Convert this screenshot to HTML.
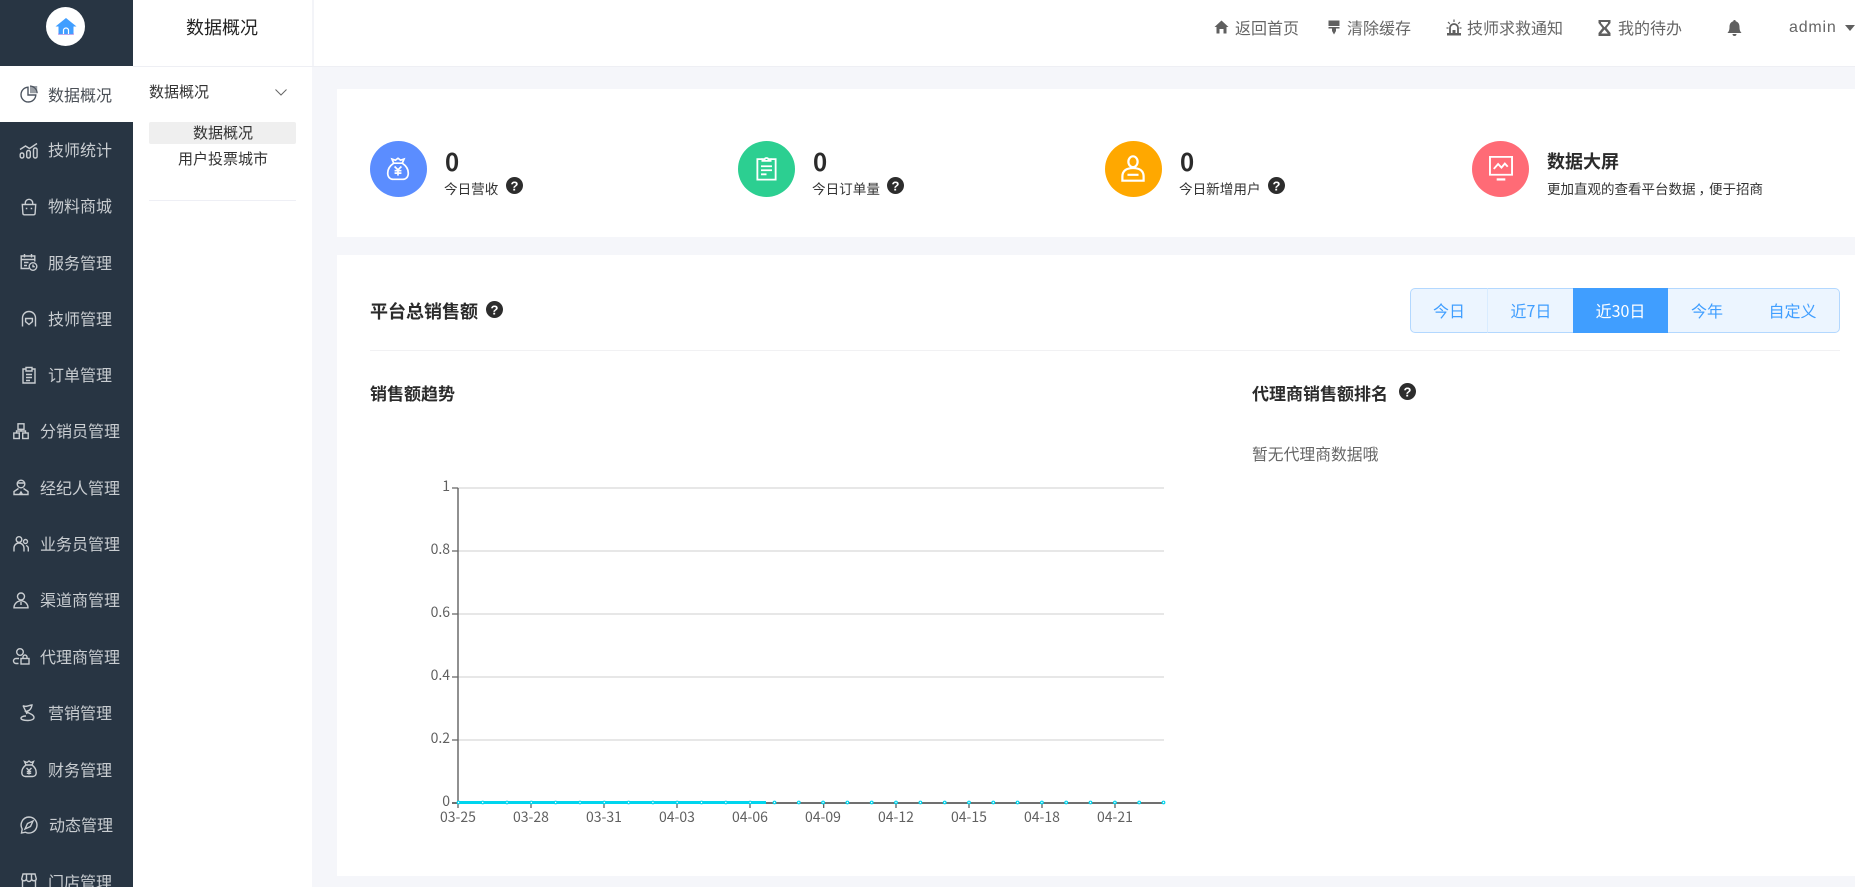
<!DOCTYPE html>
<html lang="zh"><head><meta charset="utf-8"><title>数据概况</title>
<style>
html,body{margin:0;padding:0;width:1855px;height:887px;overflow:hidden;background:#f5f6fa}
body{position:relative;font-family:"Liberation Sans","Noto Sans CJK SC",sans-serif;color:#333}
.a{position:absolute}
.t{position:absolute;height:24px;line-height:24px;white-space:nowrap;font-family:"Noto Sans CJK SC",sans-serif}
.n{font-size:16px;color:#c9cdd1}
.h{font-size:16px;color:#666}
.b{font-weight:700}
svg{position:absolute;overflow:visible}
.i{fill:none;stroke:#c9cdd1;stroke-width:1.4}
.hi{fill:#5f5f5f}
.c{position:absolute;width:57px;height:56px;border-radius:50%;top:141px}
.btn{position:absolute;top:288px;height:45px;line-height:42px;box-sizing:border-box;text-align:center;font-size:16px;color:#409eff;background:#ecf5ff;border:1px solid #b3d8ff;font-family:"Noto Sans CJK SC",sans-serif}
.y{position:absolute;right:1405px;height:20px;line-height:20px;font-size:14px;color:#606060;font-family:"Noto Sans CJK SC",sans-serif}
.x{position:absolute;width:50px;text-align:center;top:807px;height:20px;line-height:20px;font-size:14px;color:#606060;font-family:"Noto Sans CJK SC",sans-serif}
</style></head><body>

<!-- structure -->
<div class="a" style="left:133px;top:0;width:1722px;height:67px;background:#fff;border-bottom:1px solid #eeeff4;box-sizing:border-box"></div>
<div class="a" style="left:312px;top:0;width:2px;height:66px;background:#f3f4f8"></div>
<div class="a" style="left:133px;top:67px;width:179px;height:820px;background:#fff"></div>
<div class="a" style="left:0;top:0;width:133px;height:887px;background:#283543"></div>
<div class="a" style="left:0;top:66px;width:133px;height:56px;background:#fff"></div>

<!-- logo -->
<div class="a" style="left:46px;top:7px;width:39px;height:39px;border-radius:50%;background:#fff"></div>
<svg style="left:55px;top:17px" width="22" height="18" viewBox="0 0 22 18"><path d="M11 1 L21.5 9.5 L18.5 9.5 V17.5 H3.5 V9.5 H.5 Z" fill="#409eff"/><path d="M8.5 17v-3.5a2.5 2.5 0 0 1 5 0V17" fill="none" stroke="#fff" stroke-width="1.2"/><path d="M3.5 16v1.5h15V16" fill="none" stroke="#c79ce8" stroke-width=".8"/></svg>

<!-- sidebar nav -->
<svg style="left:20px;top:85px" width="18" height="18" viewBox="0 0 18 18"><path d="M8 2.2a7.4 7.4 0 1 0 7.8 7.8H8Z" fill="none" stroke="#4d5560" stroke-width="1.4"/><path d="M10 1h7.2v7.2H10Z" fill="#9a9fa5"/><path d="M10 1a7.6 7.6 0 0 1 7.2 7.2" fill="none" stroke="#4d5560" stroke-width="1.2"/></svg>
<div class="t" style="left:48px;top:82px;font-size:16px;color:#4a4f56">数据概况</div>

<svg class="i" style="left:19px;top:141px" width="20" height="18" viewBox="0 0 20 18"><path d="M1 8.5 6.5 5l4 2.5L18 2.5"/><rect x="1.2" y="12" width="3.6" height="5" rx="1.6"/><rect x="7.7" y="9.5" width="3.6" height="7.5" rx="1.6"/><rect x="14.5" y="7" width="3.6" height="10" rx="1.6"/></svg>
<div class="t n" style="left:48px;top:137px">技师统计</div>

<svg class="i" style="left:21px;top:198px" width="16" height="18" viewBox="0 0 16 18"><path d="M1.3 6.5h13.4l-.6 9a1.5 1.5 0 0 1-1.5 1.3H3.4a1.5 1.5 0 0 1-1.5-1.3Z"/><path d="M4.3 6.5V5a3.7 3.7 0 0 1 7.4 0v1.5M4.8 10.5h1.5M9.7 10.5h1.5"/></svg>
<div class="t n" style="left:48px;top:193px">物料商城</div>

<svg class="i" style="left:20px;top:253px" width="18" height="18" viewBox="0 0 18 18"><path d="M9 15.5H1.2V3h13.6v5.5M1.2 6.5h13.6M4.5 1v3.5M11.5 1v3.5M4 9.5h4.5M4 12.5h3"/><circle cx="13" cy="13.5" r="3.8"/><path d="M13 11.5v2.2h1.800"/></svg>
<div class="t n" style="left:48px;top:250px">服务管理</div>

<svg class="i" style="left:21px;top:310px" width="16" height="18" viewBox="0 0 16 18"><path d="M1.5 16.5V8a6.5 6.5 0 0 1 13 0v8.5"/><path d="M4.6 8.5h6.8v3.2L8 14.5 4.6 11.7Z"/></svg>
<div class="t n" style="left:48px;top:306px">技师管理</div>

<svg class="i" style="left:21px;top:366px" width="16" height="18" viewBox="0 0 16 18"><path d="M5 3H2v14h12V3h-3"/><path d="M5 1.5h6V5H5ZM5 8.5h6M5 11.5h6M5 14.5h4"/></svg>
<div class="t n" style="left:48px;top:362px">订单管理</div>

<svg class="i" style="left:13px;top:423px" width="16" height="16" viewBox="0 0 16 16"><rect x="5" y=".8" width="6" height="5.5"/><rect x=".8" y="10" width="5.5" height="5.5"/><rect x="9.7" y="10" width="5.5" height="5.5"/><path d="M8 6.3v1.700H3.5v2M8 8h4.500v2"/></svg>
<div class="t n" style="left:40px;top:418px">分销员管理</div>

<svg class="i" style="left:13px;top:479px" width="16" height="17" viewBox="0 0 16 17"><circle cx="8" cy="5" r="3.8"/><path d="M4.5 4h7M5.5 9.5 1 12.5V15.500H15V12.500L10.500 9.500M6.500 15.500 8 13l1.500 2.500"/></svg>
<div class="t n" style="left:40px;top:475px">经纪人管理</div>

<svg class="i" style="left:13px;top:536px" width="16" height="16" viewBox="0 0 16 16"><circle cx="6" cy="3.5" r="2.8"/><circle cx="12.5" cy="5.5" r="2"/><path d="M1 15.5v-3.5a5 5 0 0 1 10 0v3.5M13 9.5c1.500.5 2.300 1.500 2.300 3v3"/></svg>
<div class="t n" style="left:40px;top:531px">业务员管理</div>

<svg class="i" style="left:13px;top:592px" width="16" height="17" viewBox="0 0 16 17"><circle cx="8" cy="4.5" r="3.5"/><path d="M1 15.8a7 7 0 0 1 14 0ZM8 10v3"/></svg>
<div class="t n" style="left:40px;top:587px">渠道商管理</div>

<svg class="i" style="left:13px;top:648px" width="17" height="17" viewBox="0 0 17 17"><circle cx="7" cy="4" r="3.3"/><path d="M5.5 15.5H3A2.3 2.3 0 0 1 3 10.500h3"/><rect x="8" y="10.5" width="8" height="5.5"/><path d="M10 10.5v-1.500a2 2 0 0 1 4 0v1.500"/></svg>
<div class="t n" style="left:40px;top:644px">代理商管理</div>

<svg class="i" style="left:20px;top:704px" width="17" height="18" viewBox="0 0 17 18"><path d="M3 1.5c2 2 5 0 9-.5-.5 3-2 6-6 6.5 3 2 8 3 8 6 0 1.500-2 3-6 3-4.500 0-7-1-7-2.200 0-1.300 2-2.300 5-2.300M3 1.500 7 10"/></svg>
<div class="t n" style="left:48px;top:700px">营销管理</div>

<svg class="i" style="left:21px;top:760px" width="16" height="18" viewBox="0 0 16 18"><path d="M5 5 3.5 1.500 6 2.500 8 1l2 1.500 2.500-1L11 5Z"/><path d="M5 5C1.500 7.500 .8 10 .8 12.500c0 3 2 4 3.700 4h7c1.700 0 3.700-1 3.700-4 0-2.500-.7-5-4.200-7.500"/><path d="M5.500 8 8 10.500 10.500 8M8 10.500V14.500M5.800 11.500h4.400M5.800 13.300h4.400"/></svg>
<div class="t n" style="left:48px;top:757px">财务管理</div>

<svg class="i" style="left:20px;top:816px" width="18" height="18" viewBox="0 0 18 18"><path d="M9 1a8 8 0 1 1-3.500 15.200L1.500 17 2.200 13A8 8 0 0 1 9 1Z"/><path d="M13 5 10.500 10.500 5 13l2.500-5.500Z"/></svg>
<div class="t n" style="left:49px;top:812px">动态管理</div>

<svg class="i" style="left:21px;top:873px" width="16" height="18" viewBox="0 0 16 18"><path d="M2 1h12l1.300 5a2.500 2.500 0 0 1-4.800 0 2.500 2.500 0 0 1-5 0 2.500 2.500 0 0 1-4.800 0ZM1.500 7v10h13V7M5.500 1.500 5.500 6M10.500 1.500 10.500 6"/></svg>
<div class="t n" style="left:48px;top:869px">门店管理</div>

<!-- second sidebar -->
<div class="t" style="left:186px;top:15px;font-size:18px;color:#222">数据概况</div>
<div class="t" style="left:149px;top:80px;font-size:15px;color:#333">数据概况</div>
<svg style="left:275px;top:89px" width="12" height="7" viewBox="0 0 12 7"><path d="M.5.500 6 6 11.500.5" fill="none" stroke="#666" stroke-width="1"/></svg>
<div class="a" style="left:149px;top:122px;width:147px;height:22px;background:#efefef;border-radius:2px"></div>
<div class="t" style="left:193px;top:121px;font-size:15px;color:#333">数据概况</div>
<div class="t" style="left:178px;top:147px;font-size:15px;color:#333">用户投票城市</div>
<div class="a" style="left:149px;top:200px;width:147px;height:1px;background:#eeeff5"></div>

<!-- top bar -->
<svg class="hi" style="left:1214px;top:20px" width="15" height="14" viewBox="0 0 15 14"><path d="M7.5.5 14.5 7H12.500V13.500H9.500V9H5.500V13.500H2.500V7H.5Z"/></svg>
<div class="t h" style="left:1235px;top:15px">返回首页</div>
<svg class="hi" style="left:1328px;top:20px" width="12" height="15" viewBox="0 0 12 15"><path d="M.5.500h11V6H.5ZM.5 7h11v1.500H8V11L6 14.500 4 11V8.500H.5Z"/></svg>
<div class="t h" style="left:1347px;top:15px">清除缓存</div>
<svg style="left:1446px;top:19px" width="16" height="17" viewBox="0 0 16 17"><path d="M4 14V9a4 4 0 0 1 8 0v5" fill="none" stroke="#5f5f5f" stroke-width="1.800"/><path class="hi" d="M6.500 11h3v3h-3ZM1 14h14v2.500H1Z"/><path d="M8 .5v2.500M2 3l1.800 1.800M14 3l-1.800 1.800M.5 9h2M13.500 9h2" stroke="#5f5f5f" stroke-width="1.200"/></svg>
<div class="t h" style="left:1467px;top:15px">技师求救通知</div>
<svg class="hi" style="left:1598px;top:20px" width="13" height="16" viewBox="0 0 13 16"><path d="M.5 0h12v3l-4 5 4 5v3H.5v-3l4-5-4-5ZM3 2v1l3.500 4.300L10 3V2ZM6.500 9.500 3.200 13.500h6.600Z"/></svg>
<div class="t h" style="left:1618px;top:15px">我的待办</div>
<svg class="hi" style="left:1727px;top:20px" width="15" height="17" viewBox="0 0 15 17"><path d="M7.500 0a1.200 1.200 0 0 1 1.200 1.300C11.500 2 12.500 4.500 12.500 7c0 3 .7 4.500 2 6H.5c1.300-1.500 2-3 2-6 0-2.500 1-5 3.800-5.700A1.200 1.200 0 0 1 7.500 0ZM5.500 14h4a2 2 0 0 1-4 0Z"/></svg>
<div class="t" style="left:1789px;top:16px;font-size:16px;color:#666;font-family:'Liberation Sans',sans-serif;letter-spacing:.8px">admin</div>
<svg class="hi" style="left:1845px;top:25px" width="10" height="6" viewBox="0 0 10 6"><path d="M0 0h10L5 6Z"/></svg>

<!-- card 1 -->
<div class="a" style="left:337px;top:89px;width:1518px;height:148px;background:#fff"></div>

<div class="c" style="left:370px;background:#5b8dff"></div>
<svg style="left:386px;top:157px" width="24" height="24" viewBox="0 0 28 29" preserveAspectRatio="none"><path d="M9 7.5 7 2.500 11 3.800 14 1.500 17 3.800 21 2.500 19 7.500ZM9 7.500C4 11 2 15 2 19.500c0 5 3 7.500 6.500 7.500h11C23 27 26 24.500 26 19.500 26 15 24 11 19 7.500" fill="none" stroke="#fff" stroke-width="2"/><path d="M10 11.500 14 15.500l4-4M14 15.500v7M10 16.500h8M10 19.500h8" fill="none" stroke="#fff" stroke-width="2"/></svg>
<div class="t b" style="left:445px;top:149px;font-size:24px;color:#2b2b2b">0</div>
<div class="t" style="left:444px;top:176px;font-size:13.6px;color:#333">今日营收</div>

<div class="c" style="left:738px;background:#2ccf91"></div>
<svg style="left:756px;top:156px" width="21" height="25" viewBox="0 0 23 28" preserveAspectRatio="none"><path d="M7 3.500H1.500v23h20v-23H16" fill="none" stroke="#fff" stroke-width="2"/><path d="M7 5.500V3.500h2.500a2.200 2.200 0 0 1 4 0H16v2Z" fill="none" stroke="#fff" stroke-width="2"/><path d="M5.500 11.500h12M5.500 16h12M5.500 20.500h6" stroke="#fff" stroke-width="2"/></svg>
<div class="t b" style="left:813px;top:149px;font-size:24px;color:#2b2b2b">0</div>
<div class="t" style="left:812px;top:176px;font-size:13.6px;color:#333">今日订单量</div>

<div class="c" style="left:1105px;background:#ffa800"></div>
<svg style="left:1121px;top:155px" width="24" height="27" viewBox="0 0 26 30" preserveAspectRatio="none"><ellipse cx="13" cy="7.500" rx="5" ry="6" fill="none" stroke="#fff" stroke-width="2.400"/><path d="M1.500 28.500V24C1.500 17.500 6 14.500 13 14.500S24.500 17.500 24.500 24v4.500ZM7 22h12" fill="none" stroke="#fff" stroke-width="2.400"/></svg>
<div class="t b" style="left:1180px;top:149px;font-size:24px;color:#2b2b2b">0</div>
<div class="t" style="left:1179px;top:176px;font-size:13.6px;color:#333">今日新增用户</div>

<div class="c" style="left:1472px;background:#ff6b76"></div>
<svg style="left:1489px;top:156px" width="24" height="25" viewBox="0 0 25 28" preserveAspectRatio="none"><rect x="1" y="1" width="23" height="20" fill="none" stroke="#fff" stroke-width="2"/><path d="M5 14.500 9.500 9l3.500 4 3.500-4.500 3 3.500" fill="none" stroke="#fff" stroke-width="2"/><rect x="8" y="25" width="9" height="2.500" fill="#fff"/></svg>
<div class="t b" style="left:1547px;top:149px;font-size:18px;color:#2b2b2b">数据大屏</div>
<div class="t" style="left:1547px;top:176px;font-size:13.5px;color:#333">更加直观的查看平台数据<span style="position:relative;left:3px">，</span>便于招商</div>

<!-- card 2 -->
<div class="a" style="left:337px;top:255px;width:1518px;height:621px;background:#fff"></div>
<div class="t b" style="left:370px;top:299px;font-size:18px;color:#2b2b2b">平台总销售额</div>
<div class="a" style="left:370px;top:350px;width:1470px;height:1px;background:#f1f1f3"></div>
<div class="t b" style="left:370px;top:381px;font-size:17px;color:#2b2b2b">销售额趋势</div>
<div class="t b" style="left:1252px;top:381px;font-size:17px;color:#2b2b2b">代理商销售额排名</div>
<div class="t" style="left:1252px;top:442px;font-size:15.8px;color:#666">暂无代理商数据哦</div>

<!-- buttons -->
<div class="btn" style="left:1410px;width:78px;border-radius:5px 0 0 5px;border-right:1px solid #d9ecff">今日</div>
<div class="btn" style="left:1487px;width:87px;border-left:1px solid #d9ecff;border-right:0">近7日</div>
<div class="btn" style="left:1573px;width:95px;background:#409eff;border-color:#409eff;color:#fff">近30日</div>
<div class="btn" style="left:1668px;width:79px;border-left:0;border-right:1px solid #d9ecff">今年</div>
<div class="btn" style="left:1746px;width:94px;border-radius:0 5px 5px 0;border-left:0">自定义</div>

<!-- help icons -->
<svg style="left:506px;top:177px" width="17" height="17" viewBox="0 0 17 17"><circle cx="8.500" cy="8.500" r="8.500" fill="#2d2d2d"/><text x="8.500" y="13.300" text-anchor="middle" font-size="13" font-weight="700" fill="#fff" font-family="Liberation Sans">?</text></svg>
<svg style="left:887px;top:177px" width="17" height="17" viewBox="0 0 17 17"><circle cx="8.500" cy="8.500" r="8.500" fill="#2d2d2d"/><text x="8.500" y="13.300" text-anchor="middle" font-size="13" font-weight="700" fill="#fff" font-family="Liberation Sans">?</text></svg>
<svg style="left:1268px;top:177px" width="17" height="17" viewBox="0 0 17 17"><circle cx="8.500" cy="8.500" r="8.500" fill="#2d2d2d"/><text x="8.500" y="13.300" text-anchor="middle" font-size="13" font-weight="700" fill="#fff" font-family="Liberation Sans">?</text></svg>
<svg style="left:486px;top:301px" width="17" height="17" viewBox="0 0 17 17"><circle cx="8.500" cy="8.500" r="8.500" fill="#2d2d2d"/><text x="8.500" y="13.300" text-anchor="middle" font-size="13" font-weight="700" fill="#fff" font-family="Liberation Sans">?</text></svg>
<svg style="left:1399px;top:383px" width="17" height="17" viewBox="0 0 17 17"><circle cx="8.500" cy="8.500" r="8.500" fill="#2d2d2d"/><text x="8.500" y="13.300" text-anchor="middle" font-size="13" font-weight="700" fill="#fff" font-family="Liberation Sans">?</text></svg>

<!-- chart -->
<svg style="left:0;top:0" width="1855" height="887" viewBox="0 0 1855 887">
<g stroke="#dfdfdf" stroke-width="1.6">
<path d="M458 488H1164M458 551H1164M458 614H1164M458 677H1164M458 740H1164"/></g>
<path d="M458 488V803" stroke="#555" stroke-width="1.3"/>
<path d="M452 488h6M452 551h6M452 614h6M452 677h6M452 740h6M452 803h6" stroke="#666" stroke-width="1.2"/>
<path d="M452 803H1164" stroke="#707070" stroke-width="2"/>
<path d="M458 803v5M531 803v5M604 803v5M677 803v5M750 803v5M823.700 803v5M896 803v5M969 803v5M1042 803v5M1115 803v5" stroke="#555" stroke-width="1.2"/>
<path d="M458 802.500H766" stroke="#00d5ee" stroke-width="3"/>
<g fill="#fff" stroke="#00d5ee" stroke-width="1.2">
<circle cx="458.500" cy="802.500" r="1.300"/><circle cx="482.700" cy="802.500" r="1.300"/><circle cx="507" cy="802.500" r="1.300"/><circle cx="531.300" cy="802.500" r="1.300"/><circle cx="555.600" cy="802.500" r="1.300"/><circle cx="580" cy="802.500" r="1.300"/><circle cx="604.300" cy="802.500" r="1.300"/><circle cx="628.600" cy="802.500" r="1.300"/><circle cx="652.900" cy="802.500" r="1.300"/><circle cx="677.200" cy="802.500" r="1.300"/><circle cx="701.500" cy="802.500" r="1.300"/><circle cx="725.800" cy="802.500" r="1.300"/><circle cx="750.200" cy="802.500" r="1.300"/><circle cx="774.500" cy="802.500" r="1.300"/><circle cx="798.800" cy="802.500" r="1.300"/><circle cx="823.100" cy="802.500" r="1.300"/><circle cx="847.400" cy="802.500" r="1.300"/><circle cx="871.700" cy="802.500" r="1.300"/><circle cx="896" cy="802.500" r="1.300"/><circle cx="920.400" cy="802.500" r="1.300"/><circle cx="944.700" cy="802.500" r="1.300"/><circle cx="969" cy="802.500" r="1.300"/><circle cx="993.300" cy="802.500" r="1.300"/><circle cx="1017.600" cy="802.500" r="1.300"/><circle cx="1041.900" cy="802.500" r="1.300"/><circle cx="1066.200" cy="802.500" r="1.300"/><circle cx="1090.500" cy="802.500" r="1.300"/><circle cx="1114.900" cy="802.500" r="1.300"/><circle cx="1139.200" cy="802.500" r="1.300"/><circle cx="1163.500" cy="802.500" r="1.300"/>
</g></svg>

<div class="y" style="top:476px">1</div>
<div class="y" style="top:539px">0.8</div>
<div class="y" style="top:602px">0.6</div>
<div class="y" style="top:665px">0.4</div>
<div class="y" style="top:728px">0.2</div>
<div class="y" style="top:791px">0</div>

<div class="x" style="left:433px">03-25</div>
<div class="x" style="left:506px">03-28</div>
<div class="x" style="left:579px">03-31</div>
<div class="x" style="left:652px">04-03</div>
<div class="x" style="left:725px">04-06</div>
<div class="x" style="left:798px">04-09</div>
<div class="x" style="left:871px">04-12</div>
<div class="x" style="left:944px">04-15</div>
<div class="x" style="left:1017px">04-18</div>
<div class="x" style="left:1090px">04-21</div>

</body></html>
